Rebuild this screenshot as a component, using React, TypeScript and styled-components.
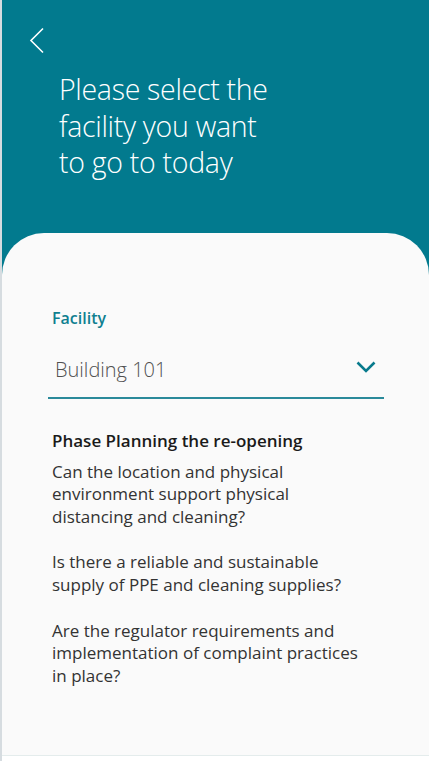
import React from "react";
import styled, { createGlobalStyle } from "styled-components";

const GlobalStyle = createGlobalStyle`
  html, body {
    margin: 0;
    padding: 0;
    background: #ffffff;
  }
  body {
    font-family: "Open Sans", "Noto Sans", sans-serif;
  }
`;

const questions = [
  "Can the location and physical environment support physical distancing and cleaning?",
  "Is there a reliable and sustainable supply of PPE and cleaning supplies?",
  "Are the regulator requirements and implementation of complaint practices in place?",
];

const App = () => {
  return (
    <>
      <GlobalStyle />
      <Page>
        <Top>
          <Header>
            <BackBtn aria-label="Back">
              <svg width="16" height="27" viewBox="0 0 16 27" fill="none">
                <path d="M14 1.5L2 13.5L14 25.5" stroke="#ffffff" strokeWidth="1.6" />
              </svg>
            </BackBtn>
            <Title>Please select the facility you want to go to today</Title>
          </Header>
          <Card>
            <Label>Facility</Label>
            <Select>
              <SelectValue>Building 101</SelectValue>
              <svg width="20" height="12" viewBox="0 0 20 12" fill="none">
                <path d="M1.5 1.5L10 10L18.5 1.5" stroke="#087a8c" strokeWidth="2.6" />
              </svg>
            </Select>
            <Info>
              <InfoTitle>Phase Planning the re-opening</InfoTitle>
              {questions.map((q, i) => (
                <Question key={i}>{q}</Question>
              ))}
            </Info>
          </Card>
        </Top>
      </Page>
    </>
  );
};

export default App;

const Page = styled.div`
  min-height: 761px;
  border-left: 2px solid #d6dce0;
  background: #ffffff;
  box-sizing: border-box;
`;

const Top = styled.div`
  background: #027a8e;
  display: flex;
  flex-direction: column;
`;

const Header = styled.div`
  display: flex;
  flex-direction: column;
  padding: 27px 0 0 27px;
  height: 233px;
  box-sizing: border-box;
`;

const BackBtn = styled.button`
  width: 16px;
  height: 27px;
  padding: 0;
  border: none;
  background: transparent;
  cursor: pointer;
  display: flex;
`;

const Title = styled.h1`
  margin: 17px 0 0 30px;
  width: 218px;
  font-size: 28.5px;
  font-weight: 300;
  line-height: 36.5px;
  color: #ffffff;
  letter-spacing: -0.3px;
`;

const Card = styled.div`
  background: #fafafa;
  border-radius: 42px 42px 0 0;
  height: 523px;
  box-sizing: border-box;
  padding: 74px 45px 0 50px;
  border-bottom: 1px solid #e4ecec;
  display: flex;
  flex-direction: column;
`;

const Label = styled.div`
  font-size: 16px;
  font-weight: 600;
  color: #0f7f90;
  line-height: 22px;
`;

const Select = styled.div`
  margin: 22px 0 0 -4px;
  height: 48px;
  border-bottom: 2px solid #2a8a9a;
  display: flex;
  justify-content: space-between;
  align-items: flex-start;
  padding: 6px 8px 0 7px;
  box-sizing: border-box;

  svg {
    margin-top: 4px;
  }
`;

const SelectValue = styled.span`
  font-size: 20px;
  font-weight: 300;
  color: #505050;
  line-height: 26px;
`;

const Info = styled.div`
  margin-top: 31px;
  display: flex;
  flex-direction: column;
  gap: 22.7px;
  width: 318px;
`;

const InfoTitle = styled.div`
  font-size: 17px;
  font-weight: 600;
  color: #1a1a1a;
  line-height: 22px;
  margin-bottom: -14px;
`;

const Question = styled.p`
  margin: 0;
  font-size: 17px;
  font-weight: 400;
  color: #333333;
  line-height: 22.7px;
`;
